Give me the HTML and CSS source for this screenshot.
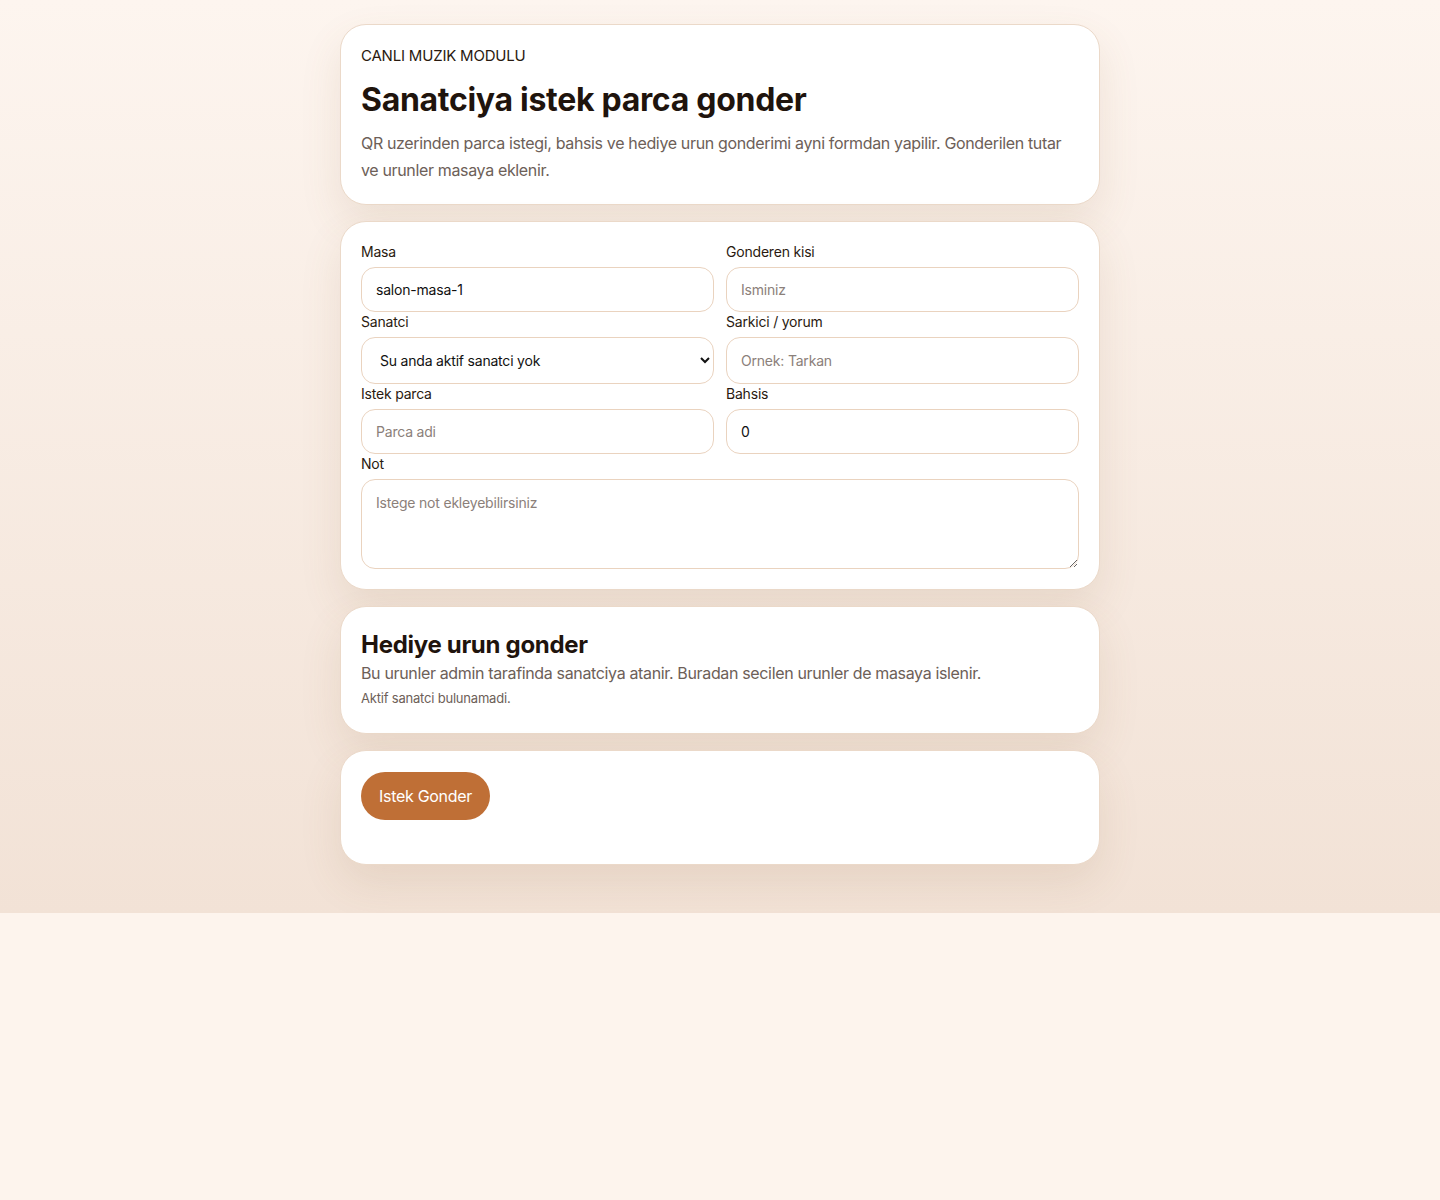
FILE: index.html
```html
<!DOCTYPE html>
<html lang="tr">
<head>
  <meta charset="UTF-8">
  <title>Canli Muzik - Istek Gonder</title>
  <meta name="viewport" content="width=device-width,initial-scale=1">
  <link rel="stylesheet" href="styles.css">
</head>
<body>
  <main class="page">
    <section class="card intro">
      <div class="eyebrow">CANLI MUZIK MODULU</div>
      <h1 class="title">Sanatciya istek parca gonder</h1>
      <p class="lead">QR uzerinden parca istegi, bahsis ve hediye urun gonderimi ayni formdan yapilir. Gonderilen tutar ve urunler masaya eklenir.</p>
    </section>

    <form class="card form-grid" id="requestForm">
      <label class="field">
        <span class="field-label">Masa</span>
        <input class="input" type="text" value="salon-masa-1">
      </label>
      <label class="field">
        <span class="field-label">Gonderen kisi</span>
        <input class="input" type="text" placeholder="Isminiz">
      </label>
      <label class="field">
        <span class="field-label">Sanatci</span>
        <select class="input select">
          <option>Su anda aktif sanatci yok</option>
        </select>
      </label>
      <label class="field">
        <span class="field-label">Sarkici / yorum</span>
        <input class="input tall" type="text" placeholder="Ornek: Tarkan">
      </label>
      <label class="field">
        <span class="field-label">Istek parca</span>
        <input class="input" type="text" placeholder="Parca adi">
      </label>
      <label class="field">
        <span class="field-label">Bahsis</span>
        <input class="input" type="number" value="0">
      </label>
      <label class="field wide">
        <span class="field-label">Not</span>
        <textarea class="input textarea" placeholder="Istege not ekleyebilirsiniz"></textarea>
      </label>
    </form>

    <section class="card gifts">
      <h2 class="subtitle">Hediye urun gonder</h2>
      <p class="gifts-desc">Bu urunler admin tarafinda sanatciya atanir. Buradan secilen urunler de masaya islenir.</p>
      <p class="muted">Aktif sanatci bulunamadi.</p>
    </section>

    <section class="card actions">
      <button class="btn" type="submit" form="requestForm">Istek Gonder</button>
      <div class="status" id="status"></div>
    </section>
  </main>
</body>
</html>
```

FILE: styles.css
```css
html { background: #fdf4ed; }
body { margin: 0; font-family: "Inter", "Noto Sans", sans-serif; color: #21150e; background: linear-gradient(180deg, #fdf5ef 0%, #f2e2d6 100%); }
.page { max-width: 760px; margin: 0 auto; padding: 24px 0 48px; display: flex; flex-direction: column; gap: 16px; }

.card { background: #fff; border: 1px solid #ebd9c9; border-radius: 26px; padding: 20px; box-shadow: 0 18px 42px rgba(140, 95, 60, 0.12); }

.eyebrow { font-size: 15px; line-height: 22px; letter-spacing: -0.2px; color: #2a1a10; }
.title { margin: 13px 0 0; font-size: 32px; line-height: 40px; font-weight: 700; letter-spacing: -0.3px; color: #1f140d; }
.lead { margin: 10px 0 0; font-size: 16px; line-height: 27px; letter-spacing: -0.35px; color: #6d6058; }

.form-grid { display: grid; grid-template-columns: 1fr 1fr; column-gap: 12px; }
.field { display: flex; flex-direction: column; }
.field.wide { grid-column: 1 / -1; }
.field-label { font-size: 14px; line-height: 20px; margin-bottom: 5px; letter-spacing: -0.2px; color: #2a1a10; }

.input { box-sizing: border-box; height: 45px; padding: 0 14px; border: 1px solid #ead3bf; border-radius: 14px; background: #fff; font: inherit; font-size: 14px; letter-spacing: -0.2px; color: #111; outline: none; }
.input::placeholder { color: #8b807a; }
.input.tall { height: 47px; }
.select { height: 47px; padding: 0 2px 0 14px; }
.textarea { height: 90px; padding: 14px 14px; resize: vertical; line-height: 18px; }

.subtitle { margin: 3px 0 0; font-size: 24px; line-height: 30px; font-weight: 700; letter-spacing: -0.3px; color: #1f140d; }
.gifts { padding-bottom: 26px; }
.gifts-desc { margin: 0; font-size: 16px; line-height: 26px; letter-spacing: -0.35px; color: #6d6058; }
.muted { margin: 3px 0 0; font-size: 13px; line-height: 18px; letter-spacing: -0.2px; color: #6d6058; }

.actions { display: flex; flex-direction: column; align-items: flex-start; padding-top: 21px; }
.btn { height: 48px; padding: 0 18px; border: none; border-radius: 999px; background: #bf6f36; color: #fff; font: inherit; font-size: 16px; letter-spacing: -0.3px; cursor: pointer; }
.btn:hover { background: #ad6230; }
.status { min-height: 24px; font-size: 14px; color: #6d6058; }
```
